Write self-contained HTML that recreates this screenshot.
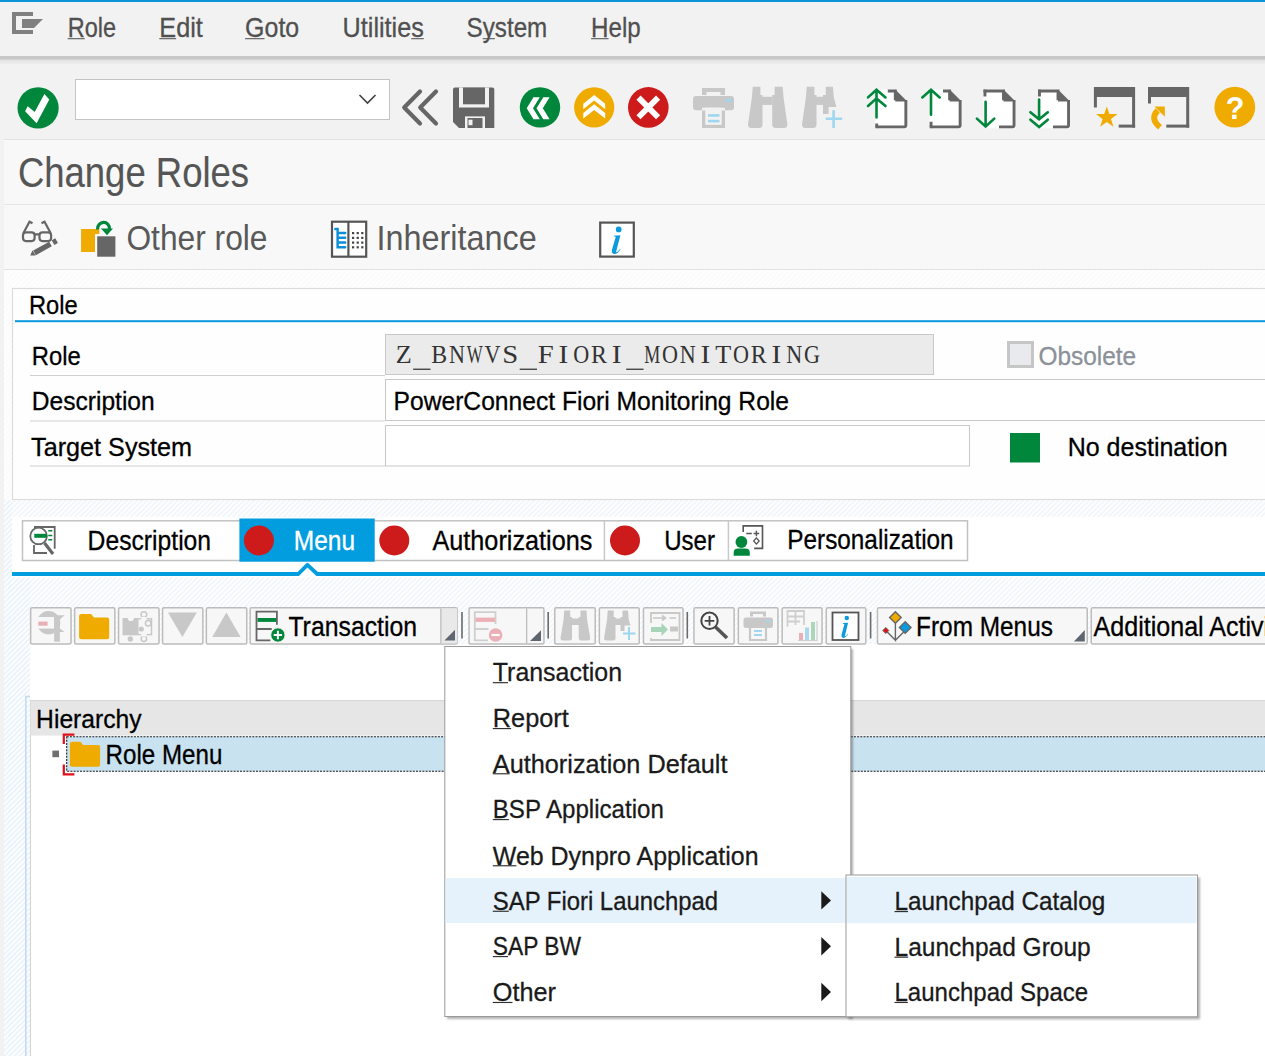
<!DOCTYPE html>
<html><head><meta charset="utf-8"><style>
html,body{margin:0;padding:0;width:1265px;height:1056px;overflow:hidden;background:#f2f2f2;}

</style></head><body><svg width="1265" height="1056" viewBox="0 0 1265 1056" style="position:absolute;left:0;top:0;display:block"><defs>
<linearGradient id="sep" x1="0" y1="0" x2="0" y2="1">
<stop offset="0" stop-color="#c8c8c8"/><stop offset="0.3" stop-color="#c6c6c6"/><stop offset="0.5" stop-color="#dcdcdc"/><stop offset="0.6" stop-color="#e8e8e8"/><stop offset="1" stop-color="#ececec"/>
</linearGradient>
<pattern id="hatch" width="3.6" height="3.6" patternUnits="userSpaceOnUse" patternTransform="rotate(45)">
<rect width="3.6" height="3.6" fill="#fdfeff"/><rect width="1.5" height="3.6" fill="#f0f5f9"/>
</pattern>
<pattern id="hatchf" width="3.6" height="3.6" patternUnits="userSpaceOnUse" patternTransform="rotate(45)">
<rect width="3.6" height="3.6" fill="#fefefe"/><rect width="1.6" height="3.6" fill="#fbfbfb"/>
</pattern>
<pattern id="hatchb" width="3.6" height="3.6" patternUnits="userSpaceOnUse" patternTransform="rotate(45)">
<rect width="3.6" height="3.6" fill="#fcfdff"/><rect width="1.6" height="3.6" fill="#e9f2fa"/>
</pattern>
<filter id="blur" x="-5%" y="-5%" width="110%" height="110%"><feGaussianBlur stdDeviation="1.2"/></filter>
</defs><rect x="0" y="0" width="1265" height="1056" fill="#f2f2f2" /><rect x="0" y="0" width="1265" height="2" fill="#0a96d8" /><rect x="0" y="2" width="1265" height="54" fill="#f2f2f2" /><rect x="0" y="56" width="1265" height="8" fill="url(#sep)"/><rect x="4" y="64" width="1261" height="75" fill="#f2f2f2" /><rect x="4" y="139" width="1261" height="1" fill="#e2e2e2" /><rect x="4" y="140" width="1261" height="64" fill="#f8f8f8" /><rect x="4" y="204" width="1261" height="1" fill="#e6e6e6" /><rect x="4" y="205" width="1261" height="65" fill="#f8f8f8" /><rect x="4" y="269" width="1261" height="1" fill="#e3e3e3" /><rect x="4" y="270" width="1261" height="230" fill="url(#hatchf)" /><rect x="4" y="500" width="1261" height="556" fill="url(#hatch)" /><rect x="12" y="516.8" width="1253" height="55.2" fill="#ffffff" /><rect x="12.5" y="288.5" width="1260" height="211" fill="#fefefe" stroke="#dcdcdc" stroke-width="1.2"/><rect x="15" y="320.2" width="1250" height="2" fill="#0a9ae0" /><path d="M12 12h21v4H16v14h17v4H12z" fill="#808080"/><path d="M22 19h21l-9 9H22z" fill="#808080"/><text x="67.70" y="37.40" font-size="27.33" fill="#505050" textLength="48.39" lengthAdjust="spacingAndGlyphs" stroke="#505050" stroke-width="0.3" style='font-family:"Liberation Sans", sans-serif' >Role</text><rect x="67.70" y="38.10" width="16.99" height="1.15" fill="#505050" opacity="0.9"/><text x="159.30" y="37.40" font-size="27.33" fill="#505050" textLength="43.50" lengthAdjust="spacingAndGlyphs" stroke="#505050" stroke-width="0.3" style='font-family:"Liberation Sans", sans-serif' >Edit</text><rect x="159.30" y="38.10" width="16.84" height="1.15" fill="#505050" opacity="0.9"/><text x="245.10" y="37.40" font-size="27.33" fill="#505050" textLength="54.10" lengthAdjust="spacingAndGlyphs" stroke="#505050" stroke-width="0.3" style='font-family:"Liberation Sans", sans-serif' >Goto</text><rect x="245.10" y="38.10" width="19.41" height="1.15" fill="#505050" opacity="0.9"/><text x="342.60" y="37.40" font-size="27.33" fill="#505050" textLength="81.19" lengthAdjust="spacingAndGlyphs" stroke="#505050" stroke-width="0.3" style='font-family:"Liberation Sans", sans-serif' >Utilities</text><rect x="411.19" y="38.10" width="12.60" height="1.15" fill="#505050" opacity="0.9"/><text x="466.60" y="37.40" font-size="27.33" fill="#505050" textLength="80.70" lengthAdjust="spacingAndGlyphs" stroke="#505050" stroke-width="0.3" style='font-family:"Liberation Sans", sans-serif' >System</text><rect x="482.74" y="38.10" width="12.10" height="1.15" fill="#505050" opacity="0.9"/><text x="591.10" y="37.40" font-size="27.33" fill="#505050" textLength="49.69" lengthAdjust="spacingAndGlyphs" stroke="#505050" stroke-width="0.3" style='font-family:"Liberation Sans", sans-serif' >Help</text><rect x="591.10" y="38.10" width="17.45" height="1.15" fill="#505050" opacity="0.9"/><rect x="75.5" y="79.5" width="314" height="40" fill="#ffffff" stroke="#c4c4c4" stroke-width="1"/><path d="M359.5 95l8 8 8-8" fill="none" stroke="#404040" stroke-width="1.6"/><text x="17.90" y="186.80" font-size="42.15" fill="#555555" textLength="231.22" lengthAdjust="spacingAndGlyphs" stroke="#555555" stroke-width="0.15" style='font-family:"Liberation Sans", sans-serif' >Change Roles</text><text x="126.40" y="250.40" font-size="34.88" fill="#595959" textLength="141.11" lengthAdjust="spacingAndGlyphs" stroke="#595959" stroke-width="0" style='font-family:"Liberation Sans", sans-serif' >Other role</text><text x="376.50" y="250.20" font-size="34.88" fill="#595959" textLength="160.29" lengthAdjust="spacingAndGlyphs" stroke="#595959" stroke-width="0" style='font-family:"Liberation Sans", sans-serif' >Inheritance</text><text x="29.00" y="313.80" font-size="26.60" fill="#000" textLength="48.69" lengthAdjust="spacingAndGlyphs" stroke="#000" stroke-width="0.3" style='font-family:"Liberation Sans", sans-serif' >Role</text><text x="31.80" y="364.60" font-size="26.60" fill="#000" textLength="48.99" lengthAdjust="spacingAndGlyphs" stroke="#000" stroke-width="0.3" style='font-family:"Liberation Sans", sans-serif' >Role</text><text x="31.80" y="410.00" font-size="26.60" fill="#000" textLength="122.90" lengthAdjust="spacingAndGlyphs" stroke="#000" stroke-width="0.3" style='font-family:"Liberation Sans", sans-serif' >Description</text><text x="31.10" y="456.00" font-size="26.60" fill="#000" textLength="161.00" lengthAdjust="spacingAndGlyphs" stroke="#000" stroke-width="0.3" style='font-family:"Liberation Sans", sans-serif' >Target System</text><rect x="30" y="375" width="355" height="1" fill="#d0d0d0" /><rect x="30" y="420.5" width="355" height="1" fill="#d0d0d0" /><rect x="30" y="465.5" width="355" height="1" fill="#d0d0d0" /><rect x="385.5" y="334.5" width="548" height="40" fill="#ebebeb" stroke="#c8c8c8" stroke-width="1"/><rect x="385.5" y="379.5" width="900" height="41" fill="#ffffff" stroke="#c8c8c8" stroke-width="1"/><rect x="385.5" y="425.5" width="584" height="40.5" fill="#ffffff" stroke="#c8c8c8" stroke-width="1"/><text x="395.69" y="363.4" font-size="25.98" fill="#333" textLength="15.98" lengthAdjust="spacingAndGlyphs" style="font-family:'Liberation Serif',serif">Z</text><rect x="413.15" y="368.6" width="17.35" height="1.3" fill="#3a3a3a"/><text x="431.19" y="363.4" font-size="25.98" fill="#333" textLength="15.98" lengthAdjust="spacingAndGlyphs" style="font-family:'Liberation Serif',serif">B</text><text x="448.95" y="363.4" font-size="25.98" fill="#333" textLength="15.98" lengthAdjust="spacingAndGlyphs" style="font-family:'Liberation Serif',serif">N</text><text x="466.70" y="363.4" font-size="25.98" fill="#333" textLength="15.98" lengthAdjust="spacingAndGlyphs" style="font-family:'Liberation Serif',serif">W</text><text x="484.45" y="363.4" font-size="25.98" fill="#333" textLength="15.98" lengthAdjust="spacingAndGlyphs" style="font-family:'Liberation Serif',serif">V</text><text x="502.20" y="363.4" font-size="25.98" fill="#333" textLength="15.98" lengthAdjust="spacingAndGlyphs" style="font-family:'Liberation Serif',serif">S</text><rect x="519.67" y="368.6" width="17.35" height="1.3" fill="#3a3a3a"/><text x="537.71" y="363.4" font-size="25.98" fill="#333" textLength="15.98" lengthAdjust="spacingAndGlyphs" style="font-family:'Liberation Serif',serif">F</text><text x="558.57" y="363.4" font-size="25.98" fill="#333" textLength="9.76" lengthAdjust="spacingAndGlyphs" style="font-family:'Liberation Serif',serif">I</text><text x="573.21" y="363.4" font-size="25.98" fill="#333" textLength="15.98" lengthAdjust="spacingAndGlyphs" style="font-family:'Liberation Serif',serif">O</text><text x="590.97" y="363.4" font-size="25.98" fill="#333" textLength="15.98" lengthAdjust="spacingAndGlyphs" style="font-family:'Liberation Serif',serif">R</text><text x="611.83" y="363.4" font-size="25.98" fill="#333" textLength="9.76" lengthAdjust="spacingAndGlyphs" style="font-family:'Liberation Serif',serif">I</text><rect x="626.18" y="368.6" width="17.35" height="1.3" fill="#3a3a3a"/><text x="644.22" y="363.4" font-size="25.98" fill="#333" textLength="15.98" lengthAdjust="spacingAndGlyphs" style="font-family:'Liberation Serif',serif">M</text><text x="661.98" y="363.4" font-size="25.98" fill="#333" textLength="15.98" lengthAdjust="spacingAndGlyphs" style="font-family:'Liberation Serif',serif">O</text><text x="679.73" y="363.4" font-size="25.98" fill="#333" textLength="15.98" lengthAdjust="spacingAndGlyphs" style="font-family:'Liberation Serif',serif">N</text><text x="700.59" y="363.4" font-size="25.98" fill="#333" textLength="9.76" lengthAdjust="spacingAndGlyphs" style="font-family:'Liberation Serif',serif">I</text><text x="715.23" y="363.4" font-size="25.98" fill="#333" textLength="15.98" lengthAdjust="spacingAndGlyphs" style="font-family:'Liberation Serif',serif">T</text><text x="732.99" y="363.4" font-size="25.98" fill="#333" textLength="15.98" lengthAdjust="spacingAndGlyphs" style="font-family:'Liberation Serif',serif">O</text><text x="750.74" y="363.4" font-size="25.98" fill="#333" textLength="15.98" lengthAdjust="spacingAndGlyphs" style="font-family:'Liberation Serif',serif">R</text><text x="771.60" y="363.4" font-size="25.98" fill="#333" textLength="9.76" lengthAdjust="spacingAndGlyphs" style="font-family:'Liberation Serif',serif">I</text><text x="786.25" y="363.4" font-size="25.98" fill="#333" textLength="15.98" lengthAdjust="spacingAndGlyphs" style="font-family:'Liberation Serif',serif">N</text><text x="804.00" y="363.4" font-size="25.98" fill="#333" textLength="15.98" lengthAdjust="spacingAndGlyphs" style="font-family:'Liberation Serif',serif">G</text><text x="393.60" y="410.30" font-size="26.60" fill="#000" textLength="395.39" lengthAdjust="spacingAndGlyphs" stroke="#000" stroke-width="0.3" style='font-family:"Liberation Sans", sans-serif' >PowerConnect Fiori Monitoring Role</text><rect x="1008.5" y="342.5" width="24" height="24" fill="#e8eaee" stroke="#c6c6c6" stroke-width="3"/><text x="1038.50" y="364.80" font-size="26.60" fill="#8b9199" textLength="97.71" lengthAdjust="spacingAndGlyphs" stroke="#8b9199" stroke-width="0.3" style='font-family:"Liberation Sans", sans-serif' >Obsolete</text><rect x="1010" y="433" width="30" height="29.5" fill="#00873c" /><text x="1067.70" y="455.70" font-size="26.60" fill="#000" textLength="159.90" lengthAdjust="spacingAndGlyphs" stroke="#000" stroke-width="0.3" style='font-family:"Liberation Sans", sans-serif' >No destination</text><circle cx="38.1" cy="107.9" r="20.6" fill="#00873c"/><path d="M25.1 111.2 L27.7 106.3 L34.7 112 L44.4 94.1 L49.3 99.5 L36.6 123.2 Z" fill="#fff"/><path d="M420 91.5 L404.2 107.5 L420 123.5 M436 91.5 L420.2 107.5 L436 123.5" fill="none" stroke="#666666" stroke-width="4.2" stroke-linecap="round" stroke-linejoin="round"/><path d="M455 87.5 H492.3 Q494.3 87.5 494.3 89.5 V128 H459 L453 122 V89.5 Q453 87.5 455 87.5 Z" fill="#666666"/><rect x="459" y="87.5" width="30" height="20" fill="#f2f2f2"/><rect x="463" y="87.5" width="22" height="16.8" fill="#666666"/><rect x="465" y="116.4" width="20" height="11.6" fill="#f2f2f2"/><rect x="467.5" y="118" width="15" height="10" fill="#666666"/><rect x="468.5" y="119.7" width="4" height="5.5" fill="#f2f2f2"/><circle cx="540" cy="107.4" r="20.2" fill="#00873c"/><path d="M533.5 97.2 H539.8 L533 108.2 L539.8 119.2 H533.5 L526.7 108.2 Z M543.3 97.2 H549.6 L542.8 108.2 L549.6 119.2 H543.3 L536.5 108.2 Z" fill="#fff"/><circle cx="594.2" cy="107.4" r="20.1" fill="#f0ab00"/><path d="M583.3 103.8 L594.2 95 L605.2 103.8 V109.3 L594.2 100.6 L583.3 109.3 Z M583.3 113 L594.2 104.3 L605.2 113 V118.6 L594.2 109.9 L583.3 118.6 Z" fill="#fff"/><circle cx="648.3" cy="107.4" r="20.3" fill="#cd1b1b"/><path d="M638.5 97.6 L658.1 117.2 M658.1 97.6 L638.5 117.2" stroke="#fff" stroke-width="5.8"/><path d="M702 88 H725 V95 H720.5 V92 H706.5 V95 H702 Z" fill="#c8c8c8"/><rect x="693" y="96" width="41" height="14.2" rx="3" fill="#c8c8c8"/><rect x="725.8" y="99" width="5.7" height="2.8" fill="#9fd6f0"/><path d="M702 107.7 H725 V128 H702 Z M705.5 110.5 V124.5 H721.5 V110.5 Z" fill="#c8c8c8" fill-rule="evenodd"/><rect x="702" y="107.7" width="23" height="2.8" fill="#f2f2f2"/><rect x="705.5" y="107.7" width="16" height="17" fill="#f2f2f2"/><rect x="708" y="114.1" width="11.5" height="2.6" fill="#9fd6f0"/><rect x="708" y="119.8" width="11.5" height="2.6" fill="#9fd6f0"/><path d="M752.8 86.8 H760.4 V95 H762.5 V124.5 Q762.5 128 759 128 H751.5 Q748 128 748 124.5 L751.8 98 Z" fill="#c8c8c8"/><rect x="762" y="96.8" width="10.2" height="8.1" fill="#c8c8c8"/><path d="M782.6 86.8 H774.6 V95 H772.2 V124.5 Q772.2 128 775.7 128 H784 Q787.4 128 787.4 124.5 L783.6 98 Z" fill="#c8c8c8"/><path d="M806.8 86.8 H814.4 V95 H816.5 V124.5 Q816.5 128 813 128 H805.5 Q802 128 802 124.5 L805.8 98 Z" fill="#c8c8c8"/><rect x="816" y="96.8" width="10.2" height="8.1" fill="#c8c8c8"/><path d="M832.9 86.8 H825.8 V95 H823 V114 H828.6 V107 H836.5 L833.9 98 Z" fill="#c8c8c8"/><path d="M833.6 110.2 V128 M825.8 118.7 H842.2" stroke="#9fd6f0" stroke-width="2.6"/><path d="M875.3 89.6 H895.3 L907.3 101.6 V128.3 H875.3 Z" fill="#fff"/><path d="M887.8 91.05 H895.3 V100.14999999999999" fill="none" stroke="#666666" stroke-width="2.9"/><path d="M895.3 89.6 L907.3 101.6 H895.3 Z" fill="#666666"/><path d="M905.8499999999999 100 V125.35000000000001 Q905.8499999999999 126.85000000000001 904.3499999999999 126.85000000000001 H875.3" fill="none" stroke="#666666" stroke-width="2.9"/><path d="M876.75 123.5 V125.35000000000001 Q876.75 126.85000000000001 878.25 126.85000000000001" fill="none" stroke="#666666" stroke-width="2.9"/><path d="M876.5 117.4 V92 M868 97.4 L876.5 89.8 L885.5 97.4 M868 106 L876.5 98.4 L885.5 106" fill="none" stroke="#00873c" stroke-width="2.6" stroke-linecap="round"/><path d="M929.6 89.6 H949.6 L961.6 101.6 V128.3 H929.6 Z" fill="#fff"/><path d="M943 91.05 H949.6 V100.14999999999999" fill="none" stroke="#666666" stroke-width="2.9"/><path d="M949.6 89.6 L961.6 101.6 H949.6 Z" fill="#666666"/><path d="M960.15 100 V125.35000000000001 Q960.15 126.85000000000001 958.65 126.85000000000001 H929.6" fill="none" stroke="#666666" stroke-width="2.9"/><path d="M931.0500000000001 121.7 V125.35000000000001 Q931.0500000000001 126.85000000000001 932.5500000000001 126.85000000000001" fill="none" stroke="#666666" stroke-width="2.9"/><path d="M931 114.8 V91 M922.3 97.4 L931 89.8 L939.7 97.4" fill="none" stroke="#00873c" stroke-width="2.6" stroke-linecap="round"/><path d="M983.5 89.6 H1003.5 L1015.5 101.6 V128.3 H983.5 Z" fill="#fff"/><path d="M983.5 91.05 H1003.5 V100.14999999999999" fill="none" stroke="#666666" stroke-width="2.9"/><path d="M1003.5 89.6 L1015.5 101.6 H1003.5 Z" fill="#666666"/><path d="M1014.05 100 V125.35000000000001 Q1014.05 126.85000000000001 1012.55 126.85000000000001 H999" fill="none" stroke="#666666" stroke-width="2.9"/><path d="M984.95 89.6 V96.5" stroke="#666666" stroke-width="2.9"/><path d="M985.6 101.7 V125 M976.9 118.6 L985.6 126.5 L994.3 118.6" fill="none" stroke="#00873c" stroke-width="2.6" stroke-linecap="round"/><path d="M1038 89.6 H1058 L1070 101.6 V128.3 H1038 Z" fill="#fff"/><path d="M1038 91.05 H1058 V100.14999999999999" fill="none" stroke="#666666" stroke-width="2.9"/><path d="M1058 89.6 L1070 101.6 H1058 Z" fill="#666666"/><path d="M1068.55 100 V125.35000000000001 Q1068.55 126.85000000000001 1067.05 126.85000000000001 H1053" fill="none" stroke="#666666" stroke-width="2.9"/><path d="M1039.45 89.6 V96.5" stroke="#666666" stroke-width="2.9"/><path d="M1039.1 99.5 V118 M1030.4 112.2 L1039.1 119.3 L1047.8 112.2 M1030.4 119.7 L1039.1 127 L1047.8 119.7" fill="none" stroke="#00873c" stroke-width="2.6" stroke-linecap="round"/><rect x="1093.9" y="87" width="41.2" height="10" fill="#666666"/><rect x="1093.9" y="97" width="3" height="10.5" fill="#666666"/><rect x="1132.1000000000001" y="97" width="3" height="30.6" fill="#666666"/><rect x="1118.7" y="124.6" width="16.40000000000009" height="3" fill="#666666"/><path d="M1106.8 106.5 L1109.4 114 L1117.6 114.1 L1111 118.9 L1113.5 126.7 L1106.8 122 L1100.1 126.7 L1102.6 118.9 L1096 114.1 L1104.2 114 Z" fill="#f0ab00"/><rect x="1148" y="87" width="41.2" height="10" fill="#666666"/><rect x="1148" y="97" width="3" height="6.5" fill="#666666"/><rect x="1186.2" y="97" width="3" height="30.6" fill="#666666"/><rect x="1166.3" y="124.6" width="22.90000000000009" height="3" fill="#666666"/><path d="M1160 127.3 Q1149.5 118.5 1157.8 110.5" fill="none" stroke="#f0ab00" stroke-width="6"/><path d="M1154.5 106.4 H1164.8 V116.8 Z" fill="#f0ab00"/><circle cx="1234.8" cy="107.2" r="20.4" fill="#f0ab00"/><text x="1235" y="119.2" font-size="30.5" font-weight="bold" fill="#fff" text-anchor="middle" style="font-family:'Liberation Sans',sans-serif">?</text><g fill="none" stroke="#666666" stroke-width="2.2"><rect x="23" y="232.3" width="11.6" height="8.8" rx="3"/><rect x="39.5" y="232.3" width="11.6" height="8.8" rx="3"/><path d="M34.6 234.3 H39.5 M23.5 233 L29.5 221.8 L32.5 223.3 M50.6 233 L44.5 221.8 L41.5 223.3"/></g><path d="M34.5 252.8 L50.5 244 M53 242.6 L56.6 240.6" stroke="#666666" stroke-width="5.4"/><path d="M30.2 255.6 L32.5 250.3 L35.6 255.4 Z" fill="#666666"/><path d="M81.1 228.9 H99.3 V234 H95 V252 H81.1 Z" fill="#f0ab00"/><rect x="97.2" y="236.3" width="18.2" height="20.4" fill="#666666"/><path d="M97.5 229.5 C97 220.5 110 219.5 109.5 229.5" fill="none" stroke="#00873c" stroke-width="3.2"/><path d="M101 228.5 H113 L107 235.2 Z" fill="#00873c"/><rect x="332" y="221.7" width="34.2" height="35" fill="#fff" stroke="#555" stroke-width="2.2"/><path d="M348.4 221.7 V256.7" stroke="#555" stroke-width="2.2"/><path d="M335.3 229 H337.6 V247.2 H345.2 M337.6 233 H345.2 M337.6 237.8 H345.2 M337.6 242.5 H345.2" fill="none" stroke="#0a8fd8" stroke-width="2.4" stroke-linecap="round"/><rect x="352" y="232" width="2.2" height="2.2" fill="#444"/><rect x="352" y="236.8" width="2.2" height="2.2" fill="#444"/><rect x="352" y="241.5" width="2.2" height="2.2" fill="#444"/><rect x="352" y="246.2" width="2.2" height="2.2" fill="#444"/><rect x="356.6" y="232" width="2.2" height="2.2" fill="#444"/><rect x="356.6" y="236.8" width="2.2" height="2.2" fill="#444"/><rect x="356.6" y="241.5" width="2.2" height="2.2" fill="#444"/><rect x="356.6" y="246.2" width="2.2" height="2.2" fill="#444"/><rect x="361.2" y="232" width="2.2" height="2.2" fill="#444"/><rect x="361.2" y="236.8" width="2.2" height="2.2" fill="#444"/><rect x="361.2" y="241.5" width="2.2" height="2.2" fill="#444"/><rect x="361.2" y="246.2" width="2.2" height="2.2" fill="#444"/><rect x="600.2" y="222.6" width="33.6" height="34" fill="#fff" stroke="#555" stroke-width="2.2"/><circle cx="618.6800000000001" cy="229.4" r="2.8560000000000003" fill="#0a9ae0"/><path d="M613.6400000000001 235.69 L620.36 235.18 L615.9920000000001 252.18 Q617.0 252.85999999999999 620.36 248.78 L620.36 249.8 Q615.32 256.6 611.96 252.51999999999998 Q611.624 250.48 612.296 248.44 L615.6560000000001 237.22 Q615.6560000000001 236.37 613.6400000000001 236.37 Z" fill="#0a9ae0"/><rect x="22.5" y="520.8" width="945" height="39.7" fill="#ffffff" stroke="#c2c2c2" stroke-width="1.5"/><rect x="239.4" y="518.5" width="135.3" height="43.2" fill="#029ddf" /><rect x="603.65" y="521" width="1.5" height="39" fill="#c8c8c8" /><rect x="727.65" y="521" width="1.5" height="39" fill="#c8c8c8" /><circle cx="258.9" cy="540.5" r="15" fill="#cd1b1b"/><circle cx="394.3" cy="540.5" r="15" fill="#cd1b1b"/><circle cx="625" cy="540.5" r="15" fill="#cd1b1b"/><text x="87.60" y="549.60" font-size="26.89" fill="#000" textLength="123.50" lengthAdjust="spacingAndGlyphs" stroke="#000" stroke-width="0.3" style='font-family:"Liberation Sans", sans-serif' >Description</text><text x="293.80" y="549.60" font-size="26.89" fill="#ffffff" textLength="61.21" lengthAdjust="spacingAndGlyphs" stroke="#ffffff" stroke-width="0.3" style='font-family:"Liberation Sans", sans-serif' >Menu</text><text x="432.50" y="549.60" font-size="26.89" fill="#000" textLength="159.80" lengthAdjust="spacingAndGlyphs" stroke="#000" stroke-width="0.3" style='font-family:"Liberation Sans", sans-serif' >Authorizations</text><text x="664.20" y="549.60" font-size="26.89" fill="#000" textLength="50.81" lengthAdjust="spacingAndGlyphs" stroke="#000" stroke-width="0.3" style='font-family:"Liberation Sans", sans-serif' >User</text><text x="787.30" y="549.30" font-size="26.89" fill="#000" textLength="166.31" lengthAdjust="spacingAndGlyphs" stroke="#000" stroke-width="0.3" style='font-family:"Liberation Sans", sans-serif' >Personalization</text><path d="M34 527 H54.7 V548.8 M34 545 V553 H47" fill="none" stroke="#666666" stroke-width="1.8"/><circle cx="38.6" cy="535.9" r="8.3" fill="#fff" stroke="#666666" stroke-width="1.8"/><rect x="34.3" y="533.8" width="12.7" height="4" fill="#00873c"/><path d="M48.3 530.8 H52.3 M48.3 535.5 H52.3 M48.3 539.8 H52.3" stroke="#00873c" stroke-width="1.6"/><path d="M44.5 543.1 L53 554" stroke="#666666" stroke-width="3.2"/><path d="M743.2 532.1 V525.9 H762.5 V548.4 H754.1" fill="none" stroke="#555" stroke-width="1.6"/><path d="M746.3 533.5 H751.8 M753.6 533.5 H759.2 M756.4 530.8 V536.2" stroke="#555" stroke-width="1.4"/><path d="M756.4 538 L759.2 541 L756.4 544 L753.6 541 Z" fill="none" stroke="#555" stroke-width="1.2"/><circle cx="741.4" cy="542" r="5.9" fill="#00873c"/><path d="M733.7 555.8 V552.5 Q733.7 548.4 738 548.4 H745.5 Q749.8 548.4 749.8 552.5 V555.8 Z" fill="#00873c"/><rect x="12" y="575.5" width="1253" height="2" fill="#ffffff" /><path d="M298 575 L307.4 565.5 L317.5 575 Z" fill="#fff"/><path d="M12 574 H298.3 L307.4 564.8 L317.2 574 H1265" fill="none" stroke="#029ddf" stroke-width="3.8" stroke-linejoin="round"/><rect x="30" y="644" width="1235" height="412" fill="#ffffff" /><rect x="4" y="500" width="8" height="556" fill="url(#hatchb)"/><rect x="12" y="577.5" width="18" height="478.5" fill="url(#hatchb)"/><rect x="25" y="695.8" width="1.6" height="360.2" fill="#c6dbee" /><rect x="25" y="695.8" width="5" height="1.5" fill="#c6dbee" /><rect x="30" y="700" width="1" height="356" fill="#d2d2d2" /><rect x="30.5" y="700.2" width="1234.5" height="35.4" fill="#e6e6e6" /><rect x="30.5" y="700.2" width="1234.5" height="1" fill="#d4d4d4" /><text x="36.10" y="727.70" font-size="26.60" fill="#000" textLength="105.50" lengthAdjust="spacingAndGlyphs" stroke="#000" stroke-width="0.3" style='font-family:"Liberation Sans", sans-serif' >Hierarchy</text><rect x="66.7" y="736.7" width="1200" height="34.5" fill="#c9e2f0" stroke="#1e1e1e" stroke-width="1.1" stroke-dasharray="2 1.2"/><rect x="52.4" y="750.6" width="6.6" height="6.6" fill="#707070" /><path d="M74.4 734.6 H63.8 V744 M63.8 764.5 V774.4 H74.4" fill="none" stroke="#e0101a" stroke-width="2.2"/><path d="M69.9 743.7 Q69.9 741.7 71.9 741.7 H80.5 L83 745 H98.1 Q100.1 745 100.1 747 V764.8 Q100.1 766.8 98.1 766.8 H71.9 Q69.9 766.8 69.9 764.8 Z" fill="#f0ab00"/><text x="105.60" y="763.60" font-size="26.89" fill="#000" textLength="116.80" lengthAdjust="spacingAndGlyphs" stroke="#000" stroke-width="0.3" style='font-family:"Liberation Sans", sans-serif' >Role Menu</text><rect x="30.65" y="607.8" width="40.4" height="36.2" rx="1.5" fill="#f7f7f7" stroke="#bcbcbc" stroke-width="1.5"/><rect x="74.65" y="607.8" width="40.19999999999999" height="36.2" rx="1.5" fill="#f7f7f7" stroke="#bcbcbc" stroke-width="1.5"/><rect x="118.55" y="607.8" width="40.500000000000014" height="36.2" rx="1.5" fill="#f7f7f7" stroke="#bcbcbc" stroke-width="1.5"/><rect x="162.55" y="607.8" width="40.29999999999998" height="36.2" rx="1.5" fill="#f7f7f7" stroke="#bcbcbc" stroke-width="1.5"/><rect x="206.35" y="607.8" width="40.400000000000006" height="36.2" rx="1.5" fill="#f7f7f7" stroke="#bcbcbc" stroke-width="1.5"/><rect x="250.15" y="607.8" width="207.1" height="36.2" rx="1.5" fill="#f7f7f7" stroke="#bcbcbc" stroke-width="1.5"/><rect x="469.05" y="607.8" width="74.90000000000003" height="36.2" rx="1.5" fill="#f7f7f7" stroke="#bcbcbc" stroke-width="1.5"/><rect x="554.75" y="607.8" width="40.5" height="36.2" rx="1.5" fill="#f7f7f7" stroke="#bcbcbc" stroke-width="1.5"/><rect x="599.35" y="607.8" width="39.89999999999998" height="36.2" rx="1.5" fill="#f7f7f7" stroke="#bcbcbc" stroke-width="1.5"/><rect x="643.45" y="607.8" width="39.59999999999991" height="36.2" rx="1.5" fill="#f7f7f7" stroke="#bcbcbc" stroke-width="1.5"/><rect x="693.95" y="607.8" width="40.19999999999993" height="36.2" rx="1.5" fill="#f7f7f7" stroke="#bcbcbc" stroke-width="1.5"/><rect x="738.35" y="607.8" width="39.60000000000002" height="36.2" rx="1.5" fill="#f7f7f7" stroke="#bcbcbc" stroke-width="1.5"/><rect x="782.15" y="607.8" width="39.89999999999998" height="36.2" rx="1.5" fill="#f7f7f7" stroke="#bcbcbc" stroke-width="1.5"/><rect x="826.25" y="607.8" width="39.60000000000002" height="36.2" rx="1.5" fill="#f7f7f7" stroke="#bcbcbc" stroke-width="1.5"/><rect x="877.45" y="607.8" width="209.79999999999995" height="36.2" rx="1.5" fill="#f7f7f7" stroke="#bcbcbc" stroke-width="1.5"/><rect x="1091.25" y="607.8" width="208.0" height="36.2" rx="1.5" fill="#f7f7f7" stroke="#bcbcbc" stroke-width="1.5"/><rect x="441" y="608.5" width="16.3" height="34.8" fill="#e9e9e9" /><rect x="440.2" y="608.5" width="1.3" height="34.8" fill="#bdbdbd" /><rect x="526" y="608.5" width="1.3" height="34.8" fill="#bdbdbd" /><rect x="461.2" y="612" width="1.6" height="26.5" fill="#6a6a6a" /><rect x="547.4000000000001" y="612" width="1.6" height="26.5" fill="#6a6a6a" /><rect x="686.5" y="612" width="1.6" height="26.5" fill="#6a6a6a" /><rect x="869.8000000000001" y="612" width="1.6" height="26.5" fill="#6a6a6a" /><path d="M444.4 640.5 H455 V629.7 Z M530 640.9 H541 V630.2 Z M1073.9 641.4 H1084.8 V630 Z" fill="#5f6670"/><circle cx="48.65" cy="622.65" r="11.65" fill="#c8c8c8"/><rect x="36" y="617" width="18.1" height="11.6" fill="#f7f7f7" /><path d="M55 615.3 H64.5 L59.9 619.5 H55 Z M55 628.6 H59.9 L64.5 631.9 H55 Z" fill="#c8c8c8"/><rect x="54.1" y="617" width="5.8" height="24.7" fill="#c8c8c8" /><rect x="38.3" y="621.6" width="9.3" height="4.1" fill="#e8b0b6" /><path d="M79.1 616 Q79.1 613.9 81.2 613.9 H91 L94 617.6 H107.1 Q109.2 617.6 109.2 619.7 V637.2 Q109.2 639.3 107.1 639.3 H81.2 Q79.1 639.3 79.1 637.2 Z" fill="#f0ab00"/><rect x="122.5" y="618" width="14.6" height="17.3" fill="#c8c8c8"/><circle cx="130.8" cy="618" r="3.1" fill="#f7f7f7"/><circle cx="130.3" cy="639" r="2.7" fill="#c8c8c8"/><rect x="137.8" y="618.8" width="13.7" height="15.8" fill="none" stroke="#c8c8c8" stroke-width="1.5"/><circle cx="143.9" cy="614.6" r="2.9" fill="#f7f7f7" stroke="#c8c8c8" stroke-width="1.5"/><rect x="141.2" y="617" width="5.4" height="3" fill="#f7f7f7"/><circle cx="143.9" cy="638.8" r="2.7" fill="#f7f7f7" stroke="#c8c8c8" stroke-width="1.5"/><rect x="141.2" y="633.5" width="5.4" height="3" fill="#f7f7f7"/><circle cx="148.2" cy="623.3" r="2.8" fill="#f7f7f7" stroke="#c8c8c8" stroke-width="1.5"/><circle cx="141.3" cy="629" r="2.6" fill="#c8c8c8"/><path d="M168 612.5 H196.8 L182.4 637.1 Z M212.2 637 H240.6 L226.4 612.5 Z" fill="#c8c8c8"/><path d="M276.9 624.8 V611.7 H256.5 V640.3 H270.4 M256.5 629 H271.7" fill="none" stroke="#666666" stroke-width="1.8"/><rect x="257.5" y="618" width="18.5" height="3.9" fill="#00873c" /><circle cx="277.9" cy="635" r="7.2" fill="#00873c" stroke="#f7f7f7" stroke-width="1"/><path d="M277.9 630.8 V639.2 M273.7 635 H282.1" stroke="#fff" stroke-width="2"/><text x="288.40" y="635.60" font-size="26.89" fill="#000" textLength="128.69" lengthAdjust="spacingAndGlyphs" stroke="#000" stroke-width="0.3" style='font-family:"Liberation Sans", sans-serif' >Transaction</text><path d="M495.5 624 V612.2 H474.8 V640.3 H488 M474.8 629 H488.5" fill="none" stroke="#cfcfcf" stroke-width="1.8"/><rect x="475.5" y="617.6" width="19.5" height="4.3" fill="#eab0b6" /><circle cx="495.6" cy="635" r="6.8" fill="#eab0b6"/><path d="M491.5 635 H499.7" stroke="#fff" stroke-width="2.2"/><path d="M564.2 610.5 H570.2 V617 H572.0 V638 Q572.0 640.5 569.5 640.5 H563.0 Q560.5 640.5 560.5 638 L563.5 620 Z" fill="#c8c8c8"/><rect x="571.5" y="618.5" width="7.5" height="6.5" fill="#c8c8c8"/><path d="M586.5 610.5 H580.5 V617 H578.7 V638 Q578.7 640.5 581.2 640.5 H587.7 Q590.2 640.5 590.2 638 L587.2 620 Z" fill="#c8c8c8"/><path d="M607.7 610.5 H613.7 V617 H615.5 V638 Q615.5 640.5 613 640.5 H606.5 Q604 640.5 604 638 L607 620 Z" fill="#c8c8c8"/><rect x="615" y="618.5" width="7.5" height="6.5" fill="#c8c8c8"/><path d="M628 610.5 H622.5 V617 H620.5 V631 H624.5 V625.5 H630.5 L628.8 620 Z" fill="#c8c8c8"/><path d="M629 627 V640 M623 633.5 H635.5" stroke="#9fd6f0" stroke-width="2"/><path d="M651 615 V613 H679.5 V640 H651 V638 M651 623 V615" fill="none" stroke="#c8c8c8" stroke-width="1.8"/><path d="M653 618 H665 M662 615.5 L665.5 618 L662 620.5 M669.5 618 H676" fill="none" stroke="#c8c8c8" stroke-width="1.6"/><path d="M651 627 H661.5 V623 L668 629.5 L661.5 636 V632 H651 Z" fill="#a8d5b8"/><rect x="670" y="626.5" width="8" height="5" fill="#c8c8c8" /><circle cx="709.5" cy="620.8" r="8.2" fill="none" stroke="#444" stroke-width="2"/><path d="M709.5 616 V625.6 M704.7 620.8 H714.3" stroke="#444" stroke-width="1.8"/><path d="M715.5 627 L727 638" stroke="#555" stroke-width="3.6"/><path d="M750 611.5 H766 V616.5 H763 V614 H753 V616.5 H750 Z" fill="#c8c8c8"/><rect x="743.5" y="617.5" width="29.5" height="10.5" rx="2.5" fill="#c8c8c8"/><rect x="766" y="620" width="4" height="2" fill="#9fd6f0"/><path d="M750 626 V640 H766 V626" fill="none" stroke="#c8c8c8" stroke-width="2.2"/><path d="M754 631 H762 M754 635 H762" stroke="#9fd6f0" stroke-width="1.8"/><path d="M787.5 626.5 V611 H804 V625 M787.5 616.5 H804 M787.5 621.5 H800 M795.5 611 V625" fill="none" stroke="#cfcfcf" stroke-width="1.8"/><rect x="799" y="633" width="4" height="7" fill="#eab0b6" /><rect x="805" y="627.5" width="4" height="12.5" fill="#a9d8ef" /><rect x="811" y="622" width="4" height="18" fill="#acd6b9" /><path d="M798 640.5 H817 V621" fill="none" stroke="#cfcfcf" stroke-width="1.2"/><rect x="832.5" y="612.5" width="26" height="27.5" fill="#fff" stroke="#555" stroke-width="1.8"/><circle cx="846.8" cy="618.0" r="2.21" fill="#0a9ae0"/><path d="M842.9 623.0875 L848.1 622.675 L844.72 636.425 Q845.5 636.975 848.1 633.675 L848.1 634.5 Q844.2 640.0 841.6 636.7 Q841.34 635.05 841.86 633.4 L844.46 624.325 Q844.46 623.6375 842.9 623.6375 Z" fill="#0a9ae0"/><path d="M895.4 623.3 V640.2 L885.8 630.5 M895.4 640.2 L905.2 630.5" fill="none" stroke="#666" stroke-width="1.4"/><path d="M895.4 611.7 L901.2 617.5 L895.4 623.3 L889.6 617.5 Z" fill="#f0ab00" stroke="#666" stroke-width="1.4"/><path d="M905.2 621.7 L911 627.5 L905.2 633.3 L899.4 627.5 Z" fill="#0a9ae0" stroke="#666" stroke-width="1.4"/><path d="M885.8 627.5 L888.8 630.5 L885.8 633.5 L882.8 630.5 Z" fill="#e01010" stroke="#666" stroke-width="1"/><text x="916.10" y="636.00" font-size="26.89" fill="#000" textLength="136.81" lengthAdjust="spacingAndGlyphs" stroke="#000" stroke-width="0.3" style='font-family:"Liberation Sans", sans-serif' >From Menus</text><text x="1093.50" y="636.00" font-size="26.89" fill="#000" textLength="214.70" lengthAdjust="spacingAndGlyphs" stroke="#000" stroke-width="0.3" style='font-family:"Liberation Sans", sans-serif' >Additional Activities</text><rect x="447" y="649" width="406" height="370" fill="#000" opacity="0.3" filter="url(#blur)"/><rect x="444.8" y="646.5" width="406" height="370" fill="#ffffff" stroke="#9a9a9a" stroke-width="1"/><rect x="445.5" y="878.1" width="401" height="44.9" fill="#e5f1fb" /><text x="492.80" y="681.40" font-size="26.60" fill="#1a1a1a" textLength="129.29" lengthAdjust="spacingAndGlyphs" stroke="#1a1a1a" stroke-width="0.3" style='font-family:"Liberation Sans", sans-serif' >Transaction</text><rect x="492.80" y="682.10" width="15.22" height="1.15" fill="#1a1a1a" opacity="0.9"/><text x="492.80" y="727.30" font-size="26.60" fill="#1a1a1a" textLength="76.01" lengthAdjust="spacingAndGlyphs" stroke="#1a1a1a" stroke-width="0.3" style='font-family:"Liberation Sans", sans-serif' >Report</text><rect x="492.80" y="728.00" width="18.29" height="1.15" fill="#1a1a1a" opacity="0.9"/><text x="492.80" y="772.50" font-size="26.60" fill="#1a1a1a" textLength="234.71" lengthAdjust="spacingAndGlyphs" stroke="#1a1a1a" stroke-width="0.3" style='font-family:"Liberation Sans", sans-serif' >Authorization Default</text><rect x="492.80" y="773.20" width="16.86" height="1.15" fill="#1a1a1a" opacity="0.9"/><text x="492.80" y="818.30" font-size="26.60" fill="#1a1a1a" textLength="170.99" lengthAdjust="spacingAndGlyphs" stroke="#1a1a1a" stroke-width="0.3" style='font-family:"Liberation Sans", sans-serif' >BSP Application</text><rect x="492.80" y="819.00" width="16.07" height="1.15" fill="#1a1a1a" opacity="0.9"/><text x="492.80" y="864.50" font-size="26.60" fill="#1a1a1a" textLength="265.71" lengthAdjust="spacingAndGlyphs" stroke="#1a1a1a" stroke-width="0.3" style='font-family:"Liberation Sans", sans-serif' >Web Dynpro Application</text><rect x="492.80" y="865.20" width="23.54" height="1.15" fill="#1a1a1a" opacity="0.9"/><text x="492.80" y="910.00" font-size="26.60" fill="#1a1a1a" textLength="225.30" lengthAdjust="spacingAndGlyphs" stroke="#1a1a1a" stroke-width="0.3" style='font-family:"Liberation Sans", sans-serif' >SAP Fiori Launchpad</text><rect x="492.80" y="910.70" width="15.93" height="1.15" fill="#1a1a1a" opacity="0.9"/><text x="492.80" y="955.30" font-size="26.60" fill="#1a1a1a" textLength="88.29" lengthAdjust="spacingAndGlyphs" stroke="#1a1a1a" stroke-width="0.3" style='font-family:"Liberation Sans", sans-serif' >SAP BW</text><rect x="492.80" y="956.00" width="15.21" height="1.15" fill="#1a1a1a" opacity="0.9"/><text x="492.80" y="1001.20" font-size="26.60" fill="#1a1a1a" textLength="63.20" lengthAdjust="spacingAndGlyphs" stroke="#1a1a1a" stroke-width="0.3" style='font-family:"Liberation Sans", sans-serif' >Other</text><rect x="492.80" y="1001.90" width="19.66" height="1.15" fill="#1a1a1a" opacity="0.9"/><path d="M821.3 891.1999999999999 L831 900.4 L821.3 909.6 Z" fill="#1a1a1a"/><path d="M821.3 937.0999999999999 L831 946.3 L821.3 955.5 Z" fill="#1a1a1a"/><path d="M821.3 982.8 L831 992 L821.3 1001.2 Z" fill="#1a1a1a"/><rect x="848.5" y="877.5" width="351.5" height="141.8" fill="#000" opacity="0.3" filter="url(#blur)"/><rect x="846" y="875" width="351.5" height="141.8" fill="#ffffff" stroke="#9a9a9a" stroke-width="1"/><rect x="847" y="877" width="349.5" height="46.2" fill="#e5f1fb" /><text x="894.50" y="910.30" font-size="26.60" fill="#1a1a1a" textLength="210.70" lengthAdjust="spacingAndGlyphs" stroke="#1a1a1a" stroke-width="0.3" style='font-family:"Liberation Sans", sans-serif' >Launchpad Catalog</text><rect x="894.50" y="911.00" width="13.51" height="1.15" fill="#1a1a1a" opacity="0.9"/><text x="894.50" y="955.90" font-size="26.60" fill="#1a1a1a" textLength="196.21" lengthAdjust="spacingAndGlyphs" stroke="#1a1a1a" stroke-width="0.3" style='font-family:"Liberation Sans", sans-serif' >Launchpad Group</text><rect x="894.50" y="956.60" width="13.63" height="1.15" fill="#1a1a1a" opacity="0.9"/><text x="894.50" y="1001.20" font-size="26.60" fill="#1a1a1a" textLength="193.69" lengthAdjust="spacingAndGlyphs" stroke="#1a1a1a" stroke-width="0.3" style='font-family:"Liberation Sans", sans-serif' >Launchpad Space</text><rect x="894.50" y="1001.90" width="13.36" height="1.15" fill="#1a1a1a" opacity="0.9"/></svg></body></html>
